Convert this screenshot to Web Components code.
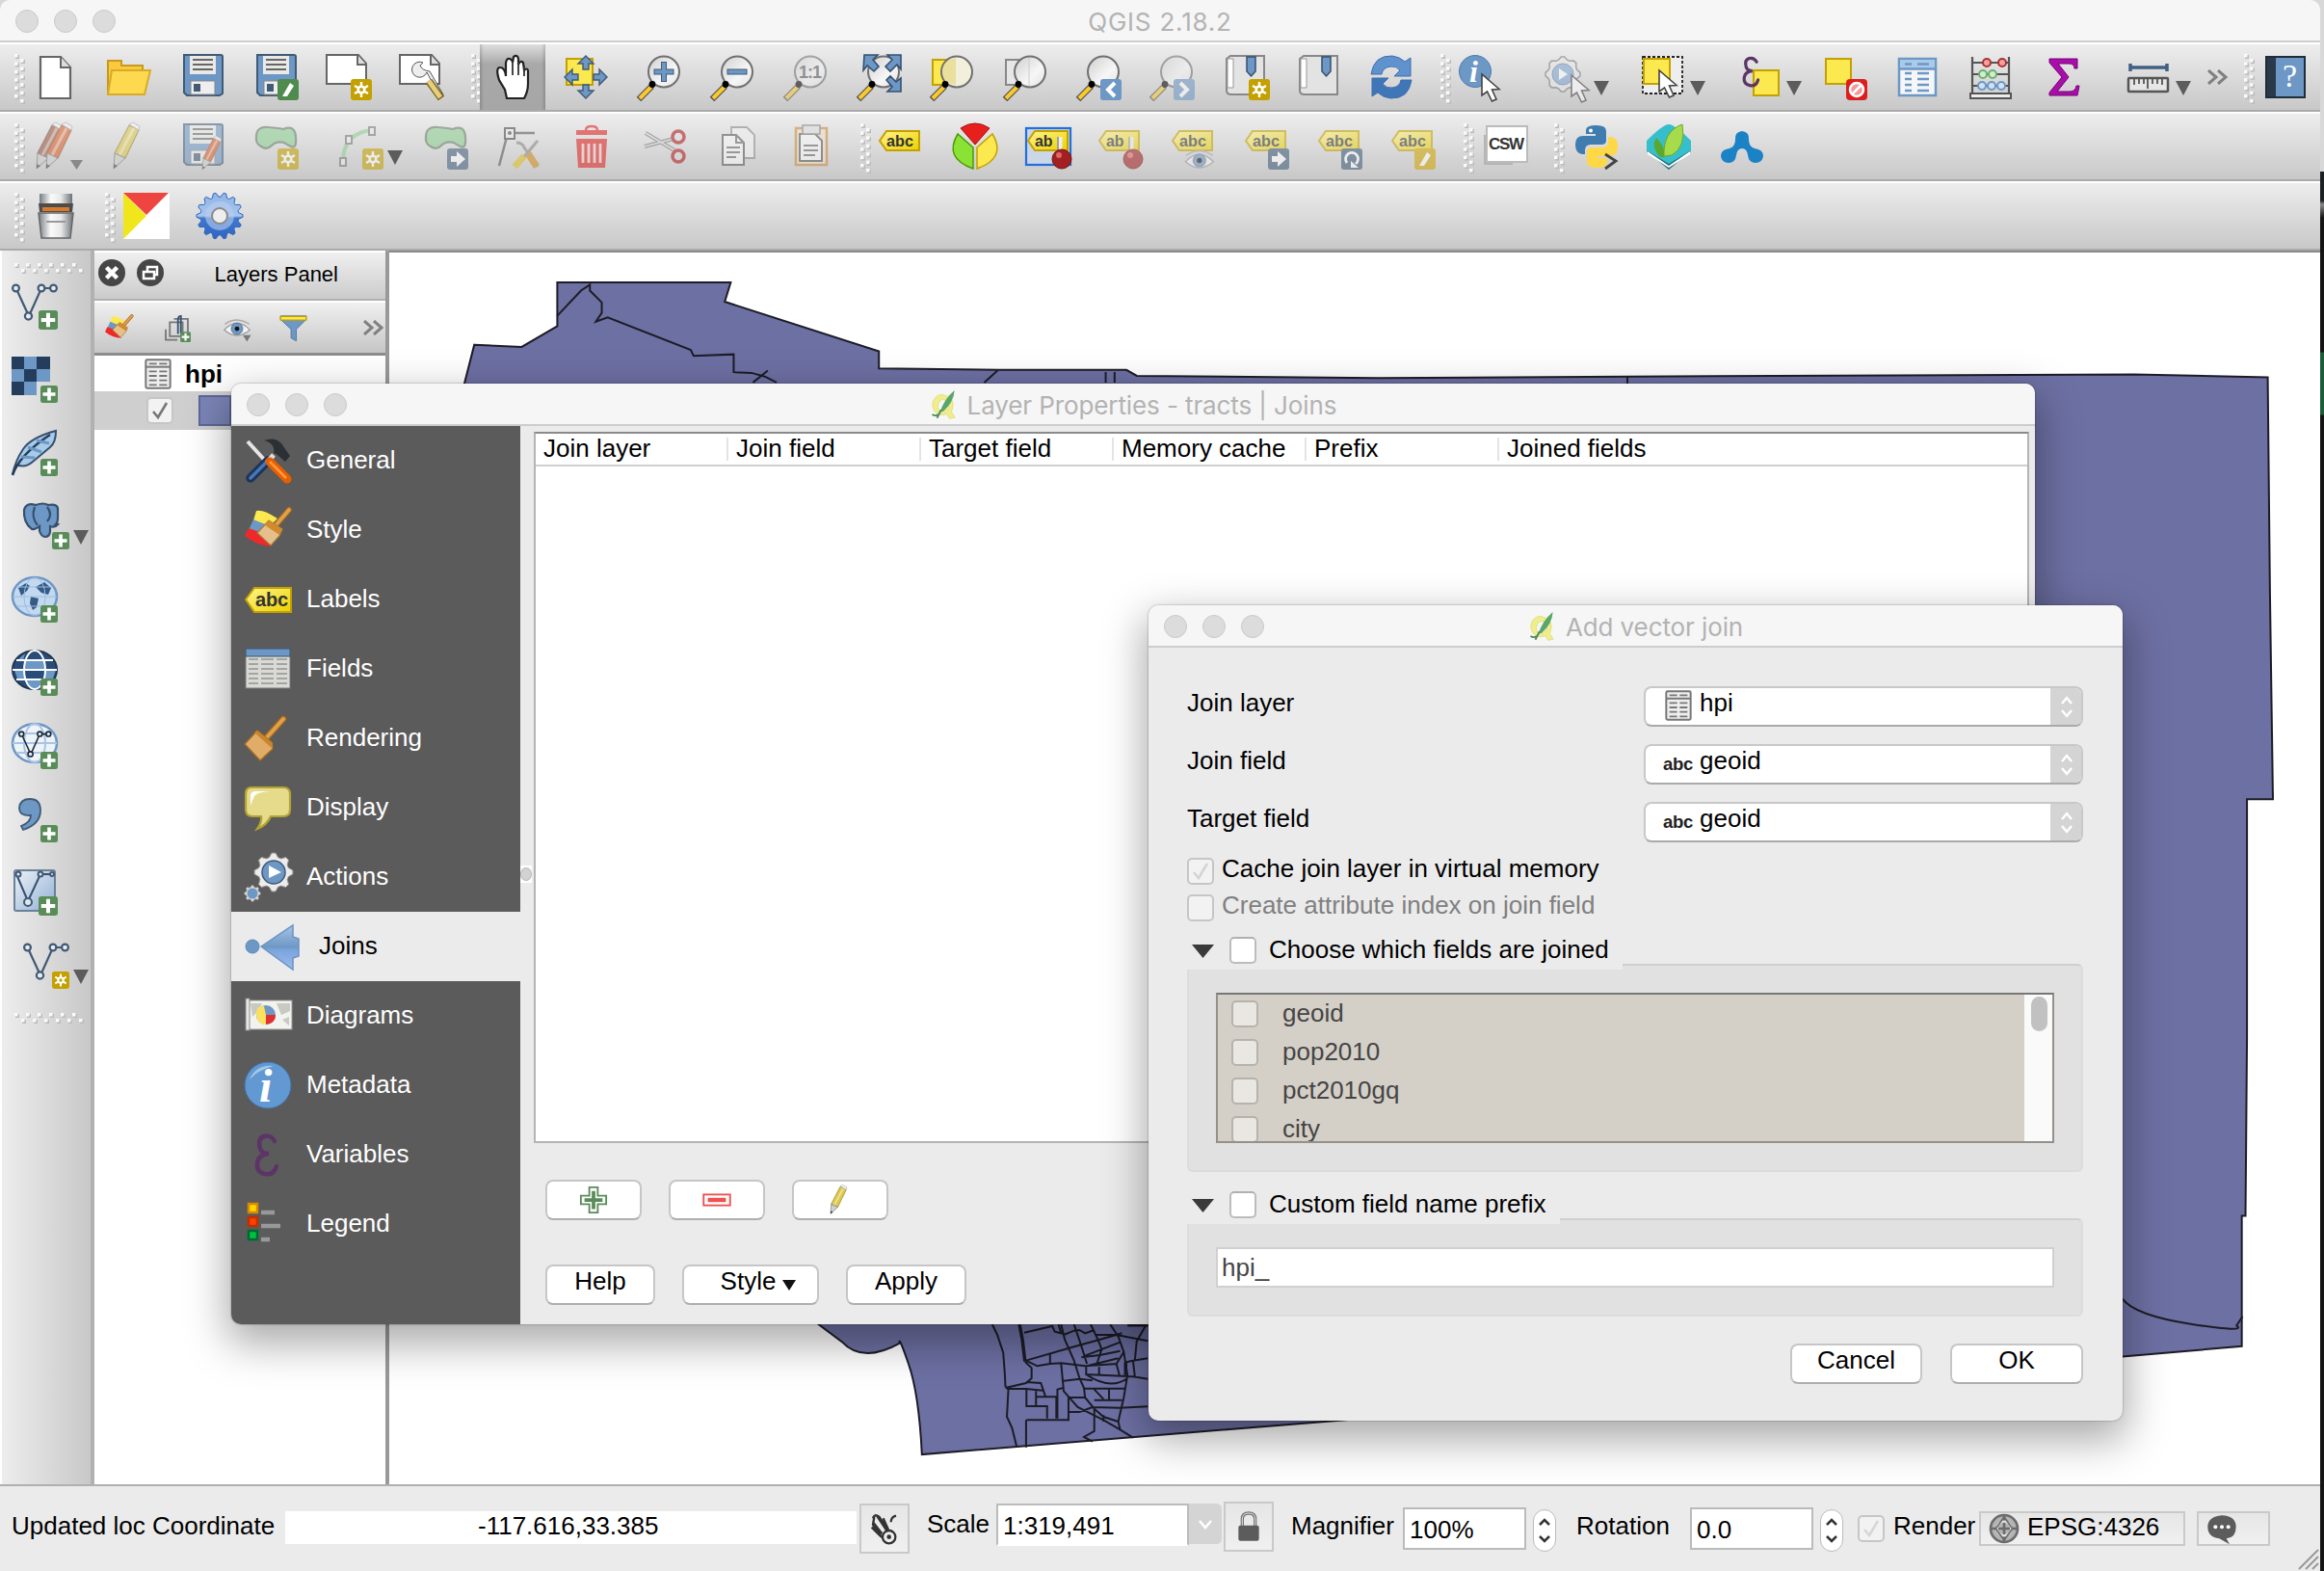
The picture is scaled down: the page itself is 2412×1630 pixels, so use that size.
<!DOCTYPE html>
<html lang="en">
<head>
<meta charset="utf-8">
<title>QGIS 2.18.2</title>
<style>
html,body{margin:0;padding:0;width:2412px;height:1630px;overflow:hidden;background:#1a1a1a}
body{font:26px/30px "Liberation Sans",Helvetica,Arial,sans-serif;color:#000}
</style>
</head>
<body>
<qgis-app></qgis-app>
<script>
const define = (name, css, html, setup) => customElements.define(name, class extends HTMLElement {
  connectedCallback() {
    if (this.shadowRoot) return;
    const root = this.attachShadow({ mode: 'open' });
    const t = document.createElement('template');
    t.innerHTML = `<style>*{box-sizing:border-box}:host{display:block;box-sizing:border-box}${css}</style>` + (typeof html === 'function' ? html(this) : html);
    root.appendChild(t.content.cloneNode(true));
    if (setup) setup(this, root);
  }
});

/* ---------- icon drawing ---------- */
const defs = `<defs>
<linearGradient id="yl" x1="0" y1="0" x2="1" y2="1"><stop offset="0" stop-color="#fff58a"/><stop offset="1" stop-color="#ecd000"/></linearGradient>
<linearGradient id="bl" x1="0" y1="0" x2="0" y2="1"><stop offset="0" stop-color="#a5c4e6"/><stop offset=".5" stop-color="#6d97c4"/><stop offset=".55" stop-color="#7ba3dc"/><stop offset="1" stop-color="#9bbcf0"/></linearGradient>
<linearGradient id="gb" x1="0" y1="0" x2="0" y2="1"><stop offset="0" stop-color="#8fb4e8"/><stop offset=".5" stop-color="#a9c6ee"/><stop offset=".55" stop-color="#3f78cf"/><stop offset="1" stop-color="#2f66c0"/></linearGradient>
<linearGradient id="mt" x1="0" y1="0" x2="1" y2="0"><stop offset="0" stop-color="#777d80"/><stop offset=".35" stop-color="#fafafa"/><stop offset=".65" stop-color="#e8e8e8"/><stop offset="1" stop-color="#6d7276"/></linearGradient>
<linearGradient id="ln" x1="0" y1="0" x2="1" y2="1"><stop offset="0" stop-color="#cfcfcf"/><stop offset=".6" stop-color="#f6f6f6"/><stop offset="1" stop-color="#e2e2e2"/></linearGradient>
<linearGradient id="bx" x1="0" y1="0" x2="1" y2="1"><stop offset="0" stop-color="#eef2f6"/><stop offset="1" stop-color="#8fafd6"/></linearGradient>
</defs>`;
const star = (x, y, s = 22) => `<g transform="translate(${x} ${y}) scale(${s / 22})"><rect width="22" height="22" rx="3" fill="#c4a000"/><path d="M11 3v16M4 7l14 8M18 7L4 15" stroke="#fff" stroke-width="2.4"/><circle cx="11" cy="11" r="4.6" fill="#fff"/><circle cx="11" cy="11" r="2" fill="#c4a000"/></g>`;
const plus = (x = 30, y = 30, s = 18) => `<g transform="translate(${x} ${y}) scale(${s / 18})"><rect width="18" height="18" rx="2.5" fill="#5a8c5a"/><path d="M9 2.5v13M2.5 9h13" stroke="#fff" stroke-width="3.6"/></g>`;
const lens = (inner = '', f = 'url(#ln)') => `<circle cx="29" cy="18.5" r="16" fill="${f}" stroke="#707070" stroke-width="2"/>${inner}<path d="M16.5 33.5L3 47" stroke="#555" stroke-width="6.6"/><path d="M15.5 34.5L4 46" stroke="#fcc92b" stroke-width="4"/><circle cx="17" cy="31.5" r="3.4" fill="#000"/>`;
const sq = (inner, c = '#6d97c4', x = 26, y = 26) => `<g transform="translate(${x} ${y})"><rect width="22" height="22" rx="3" fill="${c}"/>${inner}</g>`;
const floppy = `<path d="M5 1h38q2 0 2 2v38l-3 2H8l-3-3z" fill="#6d97c4" stroke="#415a75" stroke-width="2"/><rect x="11" y="2" width="27" height="19" fill="#e9e9e7"/><path d="M14 6h21M14 11h21M14 16h21" stroke="#666" stroke-width="2"/><rect x="12" y="28" width="25" height="14" fill="#eee" stroke="#888"/><rect x="15" y="31" width="7" height="8" fill="#415a75"/>`;
const page = `<path d="M3 1h33l8 9v21H3z" fill="#fff" stroke="#666" stroke-width="2"/><path d="M35 1v10h9" fill="#ddd" stroke="#666" stroke-width="2"/>`;
const cursor = (x, y) => `<path transform="translate(${x} ${y})" d="M0 0v22l5.500-4 5 10 4.500-2-4.500-10 7.500-.5z" fill="#fff" stroke="#444" stroke-width="1.600"/>`;
const tag = (t, y = 8) => `<path d="M3 ${y + 10}l7-10h34v20H10z" fill="url(#yl)" stroke="#c4a000" stroke-width="2"/><text x="10" y="${y + 16}" font-family="Liberation Sans,Arial,sans-serif" font-weight="bold" font-size="17" textLength="${t.length * 9.300}" lengthAdjust="spacingAndGlyphs" fill="#333">${t}</text>`;
const pen = (c, d, x = 0) => `<g transform="translate(${x} 0)"><path d="M15 31L30 2l10 5-14 29z" fill="${c}" stroke="${d}" stroke-width="1.200"/><path d="M20 33L35 5" stroke="#fff" stroke-opacity=".45" stroke-width="3"/><path d="M30 1l10 6 1-4-7-4z" fill="#f4f4f4" stroke="#aaa"/><path d="M15 31l11 5-12 11z" fill="#cfcfcf" stroke="#777"/><path d="M14 42v5l4-3z" fill="#444"/></g>`;
const blob = `<path d="M4 14Q4 3 16 4T32 6Q44 1 45 14T40 24 33 20Q25 18 20 23T9 24Q3 21 4 14z" fill="#8ccf90" stroke="#667a66" stroke-width="2.200"/>`;
const vee = c => `<path d="M6 8L18 34 31 5H43" fill="none" stroke="${c}" stroke-width="2.200"/><g fill="#e8edf2" stroke="${c}" stroke-width="2.200"><circle cx="4.500" cy="5" r="3.400"/><circle cx="17.500" cy="34" r="3.600"/><circle cx="31" cy="5" r="3.400"/><circle cx="43.500" cy="5" r="3.400"/></g>`;
const gearPath = (cx, cy, r, n, k) => { let d = ''; for (let i = 0; i < n * 4; i++) { const a = (i - .5) * Math.PI / (2 * n), q = (i % 4) < 2 ? r : r * k; d += (i ? 'L' : 'M') + (cx + q * Math.cos(a)).toFixed(1) + ' ' + (cy + q * Math.sin(a)).toFixed(1); } return d + 'z'; };
const eye = `<path d="M2 27Q24 4 46 27Q24 46 2 27z" fill="#f3f3f3" stroke="#999" stroke-width="2"/><path d="M3 17Q24 3 45 17" fill="none" stroke="#aaa" stroke-width="2.500"/><circle cx="24" cy="25" r="10" fill="#6d97c4" stroke="#415a75"/><circle cx="24" cy="25" r="4" fill="#111"/>`;
const pin = `<path d="M36 14v15" stroke="#eee" stroke-width="5"/><path d="M34 14v15" stroke="#888" stroke-width="1.500"/><circle cx="38" cy="37" r="10" fill="#a32020" stroke="#7a1515"/><circle cx="35" cy="33" r="3" fill="#d66"/>`;
const tableIc = (c, h) => `<rect x="5" y="5" width="38" height="38" fill="#f4f6f8" stroke="${c}" stroke-width="2.500"/><rect x="6" y="6" width="36" height="9" fill="${h}"/><path d="M5 15.500h38" stroke="${c}" stroke-width="2.500"/><path d="M11 10.500h7M24 10.500h12M11 20h7M24 20h12M11 26h7M24 26h12M11 32h7M24 32h12M11 38h7M24 38h12" stroke="${c}" stroke-width="2.500"/>`;
const brush = `<path d="M46 3L33 18" stroke="#a9681c" stroke-width="6" stroke-linecap="round"/><path d="M46 3L33 18" stroke="#e0a14a" stroke-width="3.600" stroke-linecap="round"/><path d="M25 14l14 9-3 7-9 10L13 27z" fill="#e6c08c" stroke="#a97a3c" stroke-width="1.200"/><path d="M25 14l14 9-3 6-15-10z" fill="#d18b2f"/>`;
const flag = `<path d="M12 4q7-2 22 8l-8 8-17-6z" fill="#fce94f"/><path d="M9 13q8 4 17 6l-9 12-13-7z" fill="#6d97c4"/><path d="M4 22l14 5 10 14Q12 40 0 30z" fill="#ef2929"/>`;
const globe = c => `<ellipse cx="24" cy="21" rx="23" ry="20" fill="${c}" stroke="#6d97c4" stroke-width="2.500"/>`;
const grid = s => `<g fill="none" stroke="${s}" stroke-width="2"><ellipse cx="24" cy="21" rx="11" ry="20"/><path d="M1 21h46M5 11h38M5 31h38"/></g>`;
const eps = c => `<path d="M28 10Q24 3 17 5T13 18Q15 23 22 23Q11 24 10 33T18 44 30 36" fill="none" stroke="${c}" stroke-width="4.500" stroke-linecap="round"/>`;

const icons = {
  new: `<path d="M8 3h21l10 11v32H8z" fill="#fff" stroke="#666" stroke-width="2.200"/><path d="M29 3v11h10" fill="#ddd" stroke="#666" stroke-width="2"/>`,
  open: `<path d="M2 42V7h14v5h22v10" fill="#fbc93d" stroke="#c79a1c" stroke-width="2"/><path d="M6 17h40l-6 25H2z" fill="#fdd94f" stroke="#d8aa28" stroke-width="2"/>`,
  save: floppy, saveas: floppy + sq('<path d="M5 18l8-14 4 3-7 11z" fill="#fff"/>', '#4f8a4f'),
  newcomp: page + star(28, 26), manager: page + `<path d="M27 9a8 8 0 1 0 4 10l10 19 7 4-14-24q-8-1-10-6z" fill="#eee" stroke="#555"/><path d="M33 28l13 18" stroke="#7a6320" stroke-width="8"/><path d="M33 28l12 17" stroke="#e6cf7a" stroke-width="5"/>`,
  pan: `<g transform="translate(2 0)"><path d="M16 46L14 37 8 27Q4 14 9 14t6 9V9q1-5 4-4t3 4l1-6q4-3 5 2v6q2-5 5-2l1 8q3-3 4 0v14q0 8-4 15z" fill="#fff" stroke="#222" stroke-width="2.200"/><path d="M22 8v14M28 8v14M34 12v11" stroke="#333" stroke-width="1.800"/></g>`,
  pansel: `<rect x="4" y="5" width="27" height="27" fill="#fce94f" stroke="#c4a000" stroke-width="2"/><path d="M24 2l8 8h-5v6h-6v-6h-5zM24 46l8-8h-5v-6h-6v6h-5zM2 24l8-8v5h6v6h-6v5zM46 24l-8-8v5h-6v6h6v5z" fill="#6d97c4" stroke="#415a75" stroke-width="1.400"/>`,
  zin: lens('<path d="M29 8v21M18.500 18.500h21" stroke="#415a75" stroke-width="6"/><path d="M29 9v19M19.500 18.500h19" stroke="#6d97c4" stroke-width="4"/>'),
  zout: lens('<path d="M18.500 18.500h21" stroke="#415a75" stroke-width="6"/><path d="M19.500 18.500h19" stroke="#6d97c4" stroke-width="4"/>'),
  z11: lens('<text x="17" y="25" font-family="Liberation Sans,Arial,sans-serif" font-weight="bold" font-size="18" textLength="24" fill="#555">1:1</text>'),
  zfull: lens() + `<path d="M9 1h14l-5 5 6 7-5 5-7-6-4 5zM47 1v15l-4-5-7 7-5-5 7-7-5-5zM47 39V25l-5 4-6-6-4 4 6 7-5 5z" fill="#6d97c4" stroke="#35506f" stroke-width="1.600"/>`,
  zsel: `<rect x="4" y="6" width="24" height="26" fill="#fce94f" stroke="#c4a000" stroke-width="2"/>` + lens('<path d="M28 4Q14 6 14 18t14 14z" fill="#e0d060" opacity=".5"/>', '#f2f0dc'),
  zlay: `<rect x="4" y="6" width="24" height="26" fill="#e6e6e6" stroke="#888" stroke-width="2"/>` + lens('<path d="M28 4v29" stroke="#ccc"/>'),
  zlast: lens() + sq('<path d="M15 4L8 11l7 7" stroke="#fff" stroke-width="4" fill="none"/>'),
  znext: lens() + sq('<path d="M7 4l7 7-7 7" stroke="#fff" stroke-width="4" fill="none"/>'),
  bookn: `<path d="M3 5l4-3h35v40H8q-5 0-5-4z" fill="#e3e3e3" stroke="#888" stroke-width="2"/><path d="M4 5h6v30H4z" fill="#fff" stroke="#999"/><path d="M24 3h9v15l-4.500 5-4.500-5z" fill="#6d97c4" stroke="#35506f" stroke-width="1.500"/>` + star(26, 26),
  book: `<path d="M3 5l4-3h35v40H8q-5 0-5-4z" fill="#e3e3e3" stroke="#888" stroke-width="2"/><path d="M4 5h6v30H4z" fill="#fff" stroke="#999"/><path d="M26 3h9v15l-4.500 5-4.500-5z" fill="#6d97c4" stroke="#35506f" stroke-width="1.500"/>`,
  refresh: `<path d="M3 21Q6 1 25 2q8 1 13 6l6-4v19H27l6-6q-4-5-10-4-8 1-9 8z" fill="#5f92cf" stroke="#3f6faa"/><path d="M45 27Q42 47 23 46q-8-1-13-6l-6 4V25h17l-6 6q4 5 10 4 8-1 9-8z" fill="#3f76b8" stroke="#3f6faa"/>`,
  identify: `<circle cx="17" cy="18" r="16.500" fill="#6d97c4" stroke="#4f7db0"/><text x="11" y="29" font-family="Liberation Serif,serif" font-weight="bold" font-style="italic" font-size="32" fill="#fff">i</text>` + cursor(24, 21),
  action: `<path d="${gearPath(20, 21, 18, 8, .86)}" fill="#e8e8e8" stroke="#777" stroke-width="1.500"/><circle cx="20" cy="21" r="11" fill="#7fa5d0" stroke="#5d7b9e"/><path d="M16 15l9 6-9 6z" fill="#fff"/>` + cursor(29, 22),
  select: `<rect x="2" y="3" width="41" height="38" fill="#eee" stroke="#222" stroke-width="1.800" stroke-dasharray="3 2"/><rect x="3" y="5" width="27" height="26" fill="#fce94f" stroke="#c4a000" stroke-width="2"/>` + cursor(19, 17),
  expr: `<rect x="14" y="17" width="26" height="26" fill="#fce94f" stroke="#c4a000" stroke-width="2"/><g transform="translate(-3 1) scale(.72)">${eps('#5c3566')}</g>`,
  desel: `<rect x="3" y="5" width="26" height="26" fill="#fce94f" stroke="#c4a000" stroke-width="2"/><rect x="24" y="26" width="22" height="22" rx="4" fill="#dc1e1e"/><circle cx="35" cy="37" r="7" fill="#f09a9a" stroke="#fff" stroke-width="2.500"/><path d="M30 42l10-10" stroke="#fff" stroke-width="2.500"/>`,
  table: tableIc('#6d97c4', '#a9cbea'),
  abacus: `<path d="M5 3v38M43 3v38M5 9h38M5 21h38M5 33h38" stroke="#555" stroke-width="2.200"/><rect x="3" y="41" width="42" height="5" fill="#eee" stroke="#555" stroke-width="2"/><g stroke-width="2"><g fill="#f6a0a0" stroke="#a33"><circle cx="20" cy="9" r="4"/><circle cx="36" cy="9" r="4"/></g><g fill="#cfeecf" stroke="#6fae6f"><circle cx="16" cy="21" r="4"/><circle cx="26" cy="21" r="4"/></g><g fill="#cfe2f6" stroke="#6d97c4"><circle cx="15" cy="33" r="4"/><circle cx="25" cy="33" r="4"/><circle cx="35" cy="33" r="4"/></g></g>`,
  sigma: `<path d="M9 5h29v10h-3q0-5-6-5H18l11 14-12 15h13q6 0 7-6h3l-2 10H9v-3l13-16L9 9z" fill="#a80fa8" stroke="#780078"/>`,
  ruler: `<path d="M5 14h38M5 10v8M43 10v8" stroke="#415f82" stroke-width="3.500"/><rect x="3" y="25" width="41" height="14" rx="1" fill="#e6e6e6" stroke="#555" stroke-width="2.500"/><path d="M9 26v6M14 26v5M19 26v5M23 26v10M28 26v5M33 26v5M38 26v6" stroke="#555" stroke-width="1.800"/>`,
  help: `<rect x="4" y="3" width="40" height="42" fill="#6d97c4" stroke="#1f2c3a" stroke-width="2"/><rect x="5" y="4" width="9" height="40" fill="#2a3a4b"/><text x="21" y="34" font-family="Liberation Serif,serif" font-size="34" fill="#fff">?</text>`,
  pens: pen('#9a5540', '#7a4a3a', -12) + pen('#d8602a', '#a54a20', -2),
  pencil: pen('#ddc94a', '#9a8a30', -6),
  saveed: floppy + `<g transform="translate(14 14) scale(.72)">${pen('#d8602a', '#a54a20')}</g>`,
  addf: blob + star(26, 26),
  curve: `<path d="M6 40Q6 10 36 7" fill="none" stroke="#8ccf90" stroke-width="4"/><g fill="#eee" stroke="#777" stroke-width="2"><rect x="3" y="36" width="6" height="8"/><rect x="9" y="13" width="6" height="8"/><rect x="33" y="4" width="6" height="8"/></g>` + star(26, 26),
  movef: blob + sq('<path d="M4 8h6V3l9 8-9 8v-5H4z" fill="#fff"/>', '#45617f'),
  node: `<path d="M10 14L2 44M13 10h26" stroke="#555" stroke-width="2.500"/><rect x="8" y="5" width="10" height="11" fill="#eee" stroke="#444" stroke-width="2"/><circle cx="13" cy="10" r="2" fill="#444"/><path d="M42 18L20 44" stroke="#888" stroke-width="3"/><path d="M28 34L18 45" stroke="#e0c020" stroke-width="7"/><path d="M20 20q6 0 8 5l14 20" stroke="#888" fill="none" stroke-width="3"/><path d="M32 31l9 14" stroke="#d08c18" stroke-width="7"/>`,
  trash: `<path d="M18 7q0-4 6-4t6 4" fill="none" stroke="#e0201c" stroke-width="2.500"/><rect x="8" y="7" width="32" height="5" fill="#e0201c"/><path d="M8 16h32l-2 30H10z" fill="#e0201c"/><path d="M15 21v20M21 21v20M27 21v20M33 21v20" stroke="#f0d0d0" stroke-width="2.800"/>`,
  cut: `<path d="M4 10l30 18M3 24l30-8" stroke="#777" stroke-width="4"/><path d="M4 10l30 18M3 24l30-8" stroke="#ddd" stroke-width="1.500"/><g fill="none" stroke="#b01818" stroke-width="3.500"><circle cx="38" cy="14" r="6"/><circle cx="38" cy="34" r="6"/></g>`,
  copy: `<path d="M17 4h16l8 8v24H17z" fill="#f2f2f2" stroke="#888" stroke-width="1.800"/><path d="M8 12h14l8 8v23H8z" fill="#fafafa" stroke="#555" stroke-width="2"/><path d="M22 12v8h8M12 25h14M12 30h14M12 35h10" stroke="#666" stroke-width="2" fill="none"/>`,
  paste: `<rect x="8" y="5" width="32" height="38" fill="#f0e0cc" stroke="#c88a3a" stroke-width="2.500"/><path d="M12 11h16l7 7v21H12z" fill="#fafafa" stroke="#555" stroke-width="2"/><path d="M16 23h15M16 28h15M16 33h12" stroke="#666" stroke-width="2"/><rect x="15" y="2" width="18" height="9" fill="#ddd" stroke="#777" stroke-width="1.500"/>`,
  abc: tag('abc'), abpin: `<rect x="1" y="5" width="46" height="38" fill="#cbd6e6" stroke="#1f6fdc" stroke-width="2.200"/>` + tag('ab') + pin,
  abpin2: tag('ab') + pin, abeye: tag('abc') + `<g transform="translate(15 22) scale(.66)">${eye}</g>`,
  abmove: tag('abc') + sq('<path d="M4 8h6V3l9 8-9 8v-5H4z" fill="#fff"/>', '#3d5a78'),
  abrot: tag('abc') + sq('<path d="M6 15a6.500 6.500 0 1 1 9 1" fill="none" stroke="#fff" stroke-width="2.800"/><path d="M10 13v7h8z" fill="#fff"/>', '#3d5a78'),
  abedit: tag('abc') + sq('<path d="M5 18l8-14 4 3-7 11z" fill="#fff"/>', '#d0a500'),
  pie: `<path d="M24 22L9 5Q24-5 39 5z" fill="#e8201c" stroke="#a01010"/><path d="M22 47V25L6 11Q-9 36 22 47z" fill="#8ae234" stroke="#4e9a06" stroke-width="1.500"/><path d="M26 47V25L42 11Q57 36 26 47z" fill="#fce94f" stroke="#c4a000" stroke-width="1.500"/>`,
  csw: `<rect x="1" y="12" width="30" height="31" fill="#b5b5b5"/><rect x="4" y="3" width="42" height="37" fill="#fff" stroke="#bbb" stroke-width="2"/><text x="6" y="27" font-family="Liberation Sans,Arial,sans-serif" font-weight="bold" font-size="17" textLength="37" fill="#333">CSW</text>`,
  python: `<path d="M24 2q10 0 10 6v10q0 4-5 4H18q-6 0-6 6v4H9Q2 31 2 22t8-9h13v-2H13V7q0-5 11-5z" fill="#3f7cb0"/><circle cx="18" cy="7.500" r="2" fill="#fff"/><path d="M24 46q-10 0-10-6V29q0-4 5-4h11q6 0 6-6v-5h3q7 1 7 10t-8 10H25v2h10v4q0 6-11 6z" fill="#ffd845"/><path d="M33 32l11 7-11 8" fill="none" stroke="#444" stroke-width="2.800"/>`,
  leaf: `<path d="M1 29l23 19 23-19-3-4-20 15L4 25z" fill="#1f6d78"/><path d="M24 1Q30 1 47 18v10L24 42 1 28V18Q18 1 24 1z" fill="#35bfcc"/><path d="M2 29l22 15 22-15v3L24 46 2 32z" fill="#fff"/><path d="M15 35Q5 24 11 15q9 8 9 20z" fill="#5aa82f"/><path d="M19 34Q18 8 38 1q4 24-11 32z" fill="#a6dc4c" stroke="#6da82a"/>`,
  dots: `<path d="M17 17q-1-8 7-9 8 1 7 9 0 7 6 9 9 1 9 8-1 7-8 7t-8-8q-1-7-6-7t-6 7q-1 8-8 8t-8-7q0-7 9-8 6-2 6-9z" fill="#1b82c5"/>`,
  bucket: `<path d="M7 1h34v10H7z" fill="url(#mt)"/><path d="M6 11h36l-1 9H7z" fill="#4c4c4c"/><path d="M10 15h28v4H10z" fill="#d97a2b"/><path d="M6 21h36l-3 26H9z" fill="url(#mt)" stroke="#666" stroke-width="1.500"/><path d="M14 30h20" stroke="#999" stroke-width="2"/>`,
  flag: `<rect width="48" height="48" fill="#fff"/><path d="M0 0l24 24L0 48z" fill="#efe61c"/><path d="M0 0h47L24 23z" fill="#ee4540"/>`,
  gear: `<path d="${gearPath(24, 24, 24, 14, .83)}" fill="url(#gb)" stroke="#2f66c0" stroke-width="1"/><circle cx="24" cy="24" r="15" fill="#b9cdee" opacity=".6"/><circle cx="24" cy="24" r="8" fill="#eee" stroke="#8a8a8a" stroke-width="2"/>`,
  vnew: vee('#415a75') + plus(28, 28, 20), vstar: vee('#415a75') + star(30, 30, 18),
  raster: `<g fill="#6d97c4"><path d="M0 0h40v26H26v14H0z"/></g><path d="M0 0h13v13H0zM26 0h14v13H26zM13 13h13v13H13zM0 26h13v14H0z" fill="#243d5c"/>` + plus(),
  feather: `<path d="M1 46Q4 32 12 20T46 1q0 12-6 17L22 33Q14 40 5 36z" fill="#a9cbea" stroke="#35506f" stroke-width="2"/><path d="M1 47Q8 26 40 5" fill="none" stroke="#243d5c" stroke-width="2.500"/><path d="M10 28l14 1M17 18l14 5M26 11l13 3" stroke="#6d97c4" stroke-width="3"/>` + plus(),
  pg: `<path d="M1 7Q3-1 13 2q8-3 13 0 11-2 10 6v8q0 4-2 6l2 0q-3 4-8 2v6q-1 5-5 5t-6-6v-5q-5 4-8 3Q0 20 1 7z" fill="#6d97c4" stroke="#35506f" stroke-width="2.200"/><path d="M12 4q-4 11 3 19M25 4q6 8 0 15" fill="none" stroke="#35506f" stroke-width="2.200"/>` + plus(),
  earth: globe('#c3d9ef') + `<path d="M7 12l8-5 4 3-3 5-6 5zM25 11l9-5 7 6-3 7-7-2zM20 21l8 2-2 9-4 3-3-7z" fill="#355a86"/>` + grid('#9dbde0').replace('stroke-width="2"', 'stroke-width="1"') + plus(),
  wms: `<ellipse cx="24" cy="21" rx="23" ry="20" fill="#294d78" stroke="#1f3550" stroke-width="2"/><path d="M14 12h20v9H14zM3 21h10v9H6zM35 21h11l-3 9h-8zM15 31h18l-5 9h-8zM6 11l8-7-2 7z" fill="#6d97c4"/>` + grid('#fff') + plus(),
  wfs: globe('#eef3f8') + grid('#a9c4e4') + `<g transform="translate(7 8) scale(.72)">${vee('#1b2a3a')}</g>` + plus(),
  comma: `<path d="M19 3q11 0 11 12 0 14-18 20l-2-4q10-4 10-11Q8 21 8 12q1-9 11-9z" fill="#6d97c4" stroke="#415a75" stroke-width="1.800"/>` + plus(),
  vbox: `<rect x="3" y="1" width="42" height="42" rx="2" fill="url(#bx)" stroke="#6b8199" stroke-width="2"/><path d="M5 5l12 28L30 5h12" fill="none" stroke="#35506f" stroke-width="2"/><g fill="#dfe7ef" stroke="#415a75" stroke-width="2"><circle cx="17" cy="34" r="4"/><circle cx="7" cy="5" r="2.500"/><circle cx="30" cy="5" r="2.500"/><circle cx="42" cy="5" r="2"/></g>` + plus(28, 28, 20),
  tools: `<path d="M3 4l20 22" stroke="#e6e6e6" stroke-width="4"/><path d="M6 42L24 24" stroke="#1c355c" stroke-width="9.500" stroke-linecap="round"/><path d="M6 42L23 25" stroke="#4a76b4" stroke-width="3.500" stroke-linecap="round"/><path d="M30 18l-7 8" stroke="#ddd" stroke-width="5"/><path d="M20 3q14-5 20 6l7 10-5 6-8-7-4-2Q32 6 20 3z" fill="#2a3034"/><path d="M26 25l18 18" stroke="#e85f00" stroke-width="9" stroke-linecap="round"/><path d="M26 25l17 17" stroke="#ff9a3c" stroke-width="2.500"/>`,
  style: flag + brush, broom: `<g transform="translate(-4 2)"><path d="M44 2L27 21" stroke="#a9681c" stroke-width="6.500" stroke-linecap="round"/><path d="M44 2L27 21" stroke="#e0a14a" stroke-width="4" stroke-linecap="round"/><path d="M17 14l15 12 1 7-13 12L4 28z" fill="#e0ac68" stroke="#a06c22" stroke-width="1.300"/><path d="M17 14l16 13v6L14 16z" fill="#c9852b"/></g>`,
  label: `<path d="M1 24l9-12h38v25H10z" fill="url(#yl)" stroke="#c4a000" stroke-width="2"/><text x="11" y="31" font-family="Liberation Sans,Arial,sans-serif" font-weight="bold" font-size="20" textLength="34" fill="#333">abc</text>`,
  fields: `<rect x="1" y="3" width="46" height="41" fill="#d9dad5" stroke="#777"/><rect x="1" y="3" width="46" height="8" fill="#6d97c4" stroke="#35506f"/><path d="M4 14h10M17 14h13M33 14h11M4 19h10M17 19h13M33 19h11M4 24h10M17 24h13M33 24h11M4 29h10M17 29h13M33 29h11M4 34h10M17 34h13M33 34h11M4 39h10M17 39h13M33 39h11" stroke="#a4a5a0" stroke-width="2"/>`,
  display: `<path d="M7 3h33q7 0 7 7v16q0 7-7 7H27q-4 9-14 13 5-7 4-13H8q-7 0-7-7V10q0-7 6-7z" fill="#e5db8b" stroke="#b3a333" stroke-width="2.200"/><path d="M6 22V12q0-5 6-5h14q-14 1-16 5t-4 10z" fill="#fff"/>`,
  actions: `<path d="${gearPath(30, 19, 20, 8, .8)}" fill="#ececec" stroke="#999"/><circle cx="30" cy="19" r="12" fill="#6d97c4" stroke="#415a75" stroke-width="1.500"/><path d="M25 12l13 7-13 6z" fill="#fff"/><path d="${gearPath(8, 41, 8.500, 8, .8)}" fill="#ddd" stroke="#888"/><circle cx="8" cy="41" r="5.500" fill="#6d97c4"/>`,
  joins: `<circle cx="8" cy="24" r="7" fill="#6d97c4" stroke="#5f88b8"/><path d="M17 24L50 2v12l6 2v18l-6 2v12z" fill="url(#bl)" stroke="#6b93c4" stroke-width="1.500"/>`,
  diagrams: `<rect x="4" y="8" width="45" height="30" fill="#f2f2ee" stroke="#999"/><rect x="1" y="6" width="4" height="33" fill="#e8e8e8" stroke="#888"/><path d="M6 11h12l-4 8-6 6zM33 11h14v8l-9 4zM39 28l7-3v9z" fill="#c6cac0"/><circle cx="22" cy="23" r="10" fill="#6d97c4"/><path d="M22 23v10q-9 0-10-10t8-9z" fill="#fce060"/><path d="M22 23h10q0 9-10 10z" fill="#e03030"/>`,
  meta: `<circle cx="24" cy="24" r="24" fill="#6299d2" stroke="#4273aa"/><path d="M5 18Q12 2 30 4 14 8 5 18z" fill="#a5c6e8"/><text x="15" y="41" font-family="Liberation Serif,serif" font-weight="bold" font-style="italic" font-size="48" fill="#fff">i</text>`,
  vars: `<g transform="translate(3 0)">${eps('#5c3566')}</g>`,
  legend: `<g stroke-width="2.500"><rect x="4" y="3" width="9" height="9" fill="#ffd500" stroke="#d88a00"/><rect x="4" y="17" width="9" height="9" fill="#ff4000" stroke="#c03000"/><rect x="4" y="31" width="9" height="9" fill="#00c040" stroke="#006a30"/></g><path d="M17 12h14M17 26h20M17 40h9" stroke="#999" stroke-width="4.500"/>`,
  laygrp: `<path d="M5 26v18h20M12 14h22v24H12zM19 8h24v22" fill="none" stroke="#777" stroke-width="3"/><path d="M26 34V10q0-7 5-7v30" fill="none" stroke="#35506f" stroke-width="3"/>` + plus(30, 30, 18),
  eyes: eye + `<path d="M34 36h14l-7 11z" fill="#777"/>`,
  filter: `<path d="M2 3h44v6L29 26v20l-9-5V26L2 9z" fill="#6d97c4" stroke="#52779f" stroke-width="1.500"/><path d="M2 4h44v6H2z" fill="#fce94f" stroke="#c4a000" stroke-width="2"/>`,
  gtable: `<rect x="5" y="2" width="38" height="44" rx="2" fill="#eee" stroke="#777" stroke-width="3"/><path d="M5 13h38" stroke="#777" stroke-width="3"/><path d="M10 8h12M26 8h12M10 20h12M26 20h12M10 27h12M26 27h12M10 34h12M26 34h12M10 41h12M26 41h12" stroke="#777" stroke-width="2.800"/>`,
  qgis: `<path d="M21 7a16 17 0 1 0 7 32l5 8 9-2-6-9Q46 12 21 7zM22 15q12 2 8 18l-4-4-6 2 5 6q-7 2-10-4t0-12 7-6z" fill="#efed8c" fill-rule="evenodd" stroke="#d9d86a" stroke-width="1"/><path d="M41 0Q24 14 17 36l5-1Q40 20 41 0z" fill="#5aa66a"/><path d="M19 32l-7 14M4 40q6 4 12-1" stroke="#4f8a5a" stroke-width="3" fill="none"/>`,
  add: `<path d="M17 3h14v14h14v14H31v14H17V31H3V17h14z" fill="#fff" stroke="#5a8c5a" stroke-width="3"/><path d="M24 9v30M9 24h30" stroke="#5a8c5a" stroke-width="6"/>`,
  minus: `<rect x="2" y="15" width="44" height="18" fill="#fff" stroke="#f05050" stroke-width="3"/><rect x="9" y="20.500" width="30" height="7" fill="#f05050"/>`,
  mouse: `<g fill="none" stroke="#333" stroke-width="3.500"><path d="M6 8Q8 0 16 6l14 22M6 14l14 18M12 4l16 24M4 22l14 14M8 6l-2 12 14 20M22 8l8 18M34 14q0-8 8-10"/><circle cx="31" cy="37" r="10" fill="#eee"/></g><circle cx="31" cy="37" r="3.500" fill="#333"/>`,
  lock: `<path d="M14 24V12q0-9 10-9t10 9v12" fill="none" stroke="#777" stroke-width="5"/><path d="M14 24V12q0-9 10-9t10 9v12" fill="none" stroke="#ddd" stroke-width="1.500"/><rect x="8" y="22" width="32" height="24" rx="3" fill="#5c5c5c"/>`,
  crs: `<circle cx="24" cy="24" r="21" fill="#b4b4b4" stroke="#6c6c6c" stroke-width="4"/><path d="M24 3v42M3 24h42" stroke="#6c6c6c" stroke-width="4"/><circle cx="24" cy="24" r="11" fill="none" stroke="#e4e4e4" stroke-width="3.500"/><path d="M24 6L11 24l13 18 13-18z" fill="none" stroke="#6c6c6c" stroke-width="2.500"/>`,
  bubble: `<path d="M24 2q22 1 22 18T31 38l5 9-16-9Q2 36 2 20T24 2z" fill="#5c5c5c"/><g fill="#fff"><circle cx="14" cy="20" r="3"/><circle cx="24" cy="20" r="3"/><circle cx="34" cy="20" r="3"/></g>`
};

define('q-icon', ':host{flex:none;width:48px;height:48px}svg{display:block;width:100%;height:100%;overflow:visible}:host([dim]) svg{opacity:.56}',
  h => `<svg viewBox="0 0 48 48">${defs}${icons[h.getAttribute('name')] || ''}</svg>`);
define('q-arrow', ':host{flex:none;width:16px;height:15px}svg{display:block;width:100%;height:100%}',
  h => `<svg viewBox="0 0 16 15" preserveAspectRatio="none"><path d="M0 0h16L8 15z" fill="${h.getAttribute('color') || '#5c5c5c'}"/></svg>`);
define('q-chevron', ':host{flex:none;width:21px;height:16px}svg{display:block;width:100%;height:100%}',
  `<svg viewBox="0 0 21 16"><path d="M1 1l8 7-8 7M11 1l8 7-8 7" fill="none" stroke="#808080" stroke-width="3"/></svg>`);
define('q-grip', ':host{flex:none}svg{display:block}', h => {
  const v = !h.hasAttribute('flat'); let s = '';
  for (let i = 0; i < 6; i++) {
    const a = v ? [1, i * 8.400 + i % 1] : [i * 12 + 1, 1], b = v ? [7, i * 8.400 + 5] : [i * 12 + 8, 7];
    for (const [x, y] of [a, b]) s += `<rect x="${x + 1}" y="${y + 1}" width="4" height="4" fill="#bbb"/><rect x="${x}" y="${y}" width="3.500" height="3.500" fill="#fafafa"/>`;
  }
  return v ? `<svg width="12" height="52">${s}</svg>` : `<svg width="76" height="13">${s}</svg>`;
});

/* ---------- toolbars: [kind, left edge, dimmed] ---------- */
const rows = [
  [['grip', 14], ['new', 34], ['open', 110], ['save', 186], ['saveas', 262], ['newcomp', 336], ['manager', 412], ['grip', 488], ['pan', 508], ['pansel', 584], ['zin', 660], ['zout', 736], ['z11', 812, 1], ['zfull', 888], ['zsel', 964], ['zlay', 1040], ['zlast', 1116], ['znext', 1192, 1], ['bookn', 1270], ['book', 1346], ['refresh', 1420], ['grip', 1494], ['identify', 1514], ['action', 1602, 1], ['arrow', 1654], ['select', 1703], ['arrow', 1754], ['expr', 1806], ['arrow', 1854], ['desel', 1892], ['table', 1966], ['abacus', 2042], ['sigma', 2118], ['ruler', 2206], ['arrow', 2258], ['chev', 2291], ['grip', 2328], ['help', 2348]],
  [['grip', 14], ['pens', 36, 1], ['arrowp', 73], ['pencil', 110, 1], ['saveed', 186, 1], ['addf', 262, 1], ['curve', 350, 1], ['arrow', 402], ['movef', 438, 1], ['node', 516, 1], ['trash', 590, 1], ['cut', 666, 1], ['copy', 742, 1], ['paste', 818, 1], ['grip', 892], ['abc', 910], ['pie', 988], ['abpin', 1064], ['abpin2', 1138, 1], ['abeye', 1214, 1], ['abmove', 1290, 1], ['abrot', 1366, 1], ['abedit', 1442, 1], ['grip', 1518], ['csw', 1539], ['grip', 1612], ['python', 1633], ['leaf', 1708], ['dots', 1784]],
  [['grip', 14], ['bucket', 34], ['grip', 108], ['flag', 128], ['gear', 204]]
];
define('q-toolbar', `:host{display:flex;height:72px;flex:none;border-top:2px solid #fff;border-bottom:2px solid #aaa;background:linear-gradient(#ededed,#c8c8c8);align-items:flex-start}
.pressed{height:68px;width:68px;background:linear-gradient(90deg,rgba(0,0,0,.16),transparent 4px,transparent 64px,rgba(0,0,0,.16)),linear-gradient(#dedede,#a9a9a9 30%,#a6a6a6);display:flex;padding:10px}
q-icon,q-grip{margin-top:10px}.pressed q-icon{margin-top:0}`, h => {
  let end = 0;
  return rows[+h.getAttribute('row')].map(([n, x, dim]) => {
    const place = (left, w, tag, attrs, mt, inner = '') => { const m = left - end; end = left + w; return `<${tag} ${attrs} style="margin-left:${m}px;${mt}">${inner}</${tag}>`; };
    if (n === 'grip') return place(x, 12, 'q-grip', '', '');
    if (n === 'arrow') return place(x, 16, 'q-arrow', '', 'margin-top:38px');
    if (n === 'arrowp') return place(x, 13, 'q-arrow', 'color="#8a8a8a"', 'margin-top:48px;width:13px;height:10px');
    if (n === 'chev') return place(x, 21, 'q-chevron', '', 'margin-top:26px');
    if (n === 'pan') return place(498, 68, 'div', 'class="pressed"', '', '<q-icon name="pan"></q-icon>');
    return place(x, 48, 'q-icon', `name="${n}" ${dim ? 'dim' : ''}`, '');
  }).join('');
});

define('q-lights', ':host{display:flex;gap:16px;width:200px;padding-left:16px;flex:none}i{width:24px;height:24px;border-radius:50%;background:#dcdcdc;border:1.500px solid #cacaca}', '<i></i><i></i><i></i>');
define('q-titlebar', `:host{display:flex;align-items:center;height:44px;flex:none;background:#f6f6f6;border-bottom:2px solid #cdcdcd;border-radius:10px 10px 0 0;font:26px/32px Inter,"Liberation Sans",sans-serif;color:#b3b3b3;white-space:nowrap;padding-top:2px}
.t{flex:1;display:flex;justify-content:center;align-items:center;gap:9px;padding-top:2px}.t q-icon{width:30px;height:32px;margin-top:-2px}.end{width:200px}`,
  h => `<q-lights></q-lights><div class="t">${h.hasAttribute('logo') ? '<q-icon name="qgis"></q-icon>' : ''}<slot></slot></div><div class="end"></div>`);

define('q-check', `:host{flex:none;width:28px;height:28px;border:2px solid #bcbcbc;border-top-color:#b0b0b0;border-radius:5px;background:#fff}
:host([off]){background:#f2f2f2;border-color:#c6c6c6}:host([list]){background:#e8e7e2;border-color:#b7b3aa}svg{display:block;width:24px;height:24px}`,
  h => h.hasAttribute('mark') ? `<svg viewBox="0 0 24 24"><path d="M5 13l5 6L19 4" fill="none" stroke="${h.getAttribute('mark')}" stroke-width="2.600"/></svg>` : '');
define('q-button', ':host{display:flex;justify-content:center;height:42px;border:2px solid #c6c6c6;border-bottom-color:#aeaeae;border-radius:8px;background:#fff;padding-top:0;flex:none}q-icon,::slotted(q-icon){margin-top:4px}', '<slot></slot>');

define('side-tools', `:host{display:flex;flex-direction:column;width:98px;flex:none;border-left:2px solid #fff;border-right:4px solid #b1b1b1;background:linear-gradient(90deg,#ededed,#c8c8c8);padding:12px 0 0 10px;gap:28px}
q-grip{margin:0 0 -18px 2px;height:12px}.m{display:flex;padding-left:12px;gap:4px;align-items:flex-start}.m q-arrow{margin-top:28px}.last{margin:-4px 0 0 2px}`,
  `<q-grip flat></q-grip>${['vnew', 'raster', 'feather', '*pg', 'earth', 'wms', 'wfs', 'comma', 'vbox', '*vstar'].map(n => n[0] === '*' ? `<div class="m"><q-icon name="${n.slice(1)}"></q-icon><q-arrow></q-arrow></div>` : `<q-icon name="${n}"></q-icon>`).join('')}<q-grip flat class="last"></q-grip>`);

define('layers-panel', `:host{display:flex;flex-direction:column;width:306px;flex:none;background:#fff;border-right:4px solid #999}
.head{height:50px;display:flex;align-items:center;border-top:2px solid #fff;background:linear-gradient(#f0f0f0,#cbcbcb);padding:0 49px 4px 4px;font-size:22px;gap:12px}
.head span{flex:1;text-align:right;padding-top:1px}.head svg{flex:none;margin-top:-2px}
.bar{height:59px;border-top:2px solid #b0b0b0;border-bottom:3px solid #8c8c8c;background:linear-gradient(#fff 2px,#f0f0f0 2px,#c6c6c6);display:flex;align-items:center;padding:2px 2px 0 11px}
.bar q-icon{width:29px;height:29px;margin-right:31px}.bar q-icon:nth-child(3){width:34px;margin-right:27px}.bar q-icon:nth-child(4){margin-right:auto}
.row{height:37px;display:flex;align-items:center;padding-left:50px;font-weight:bold}.row q-icon{width:32px;height:32px;margin-right:12px}
.sel{height:40px;background:#cfcfcf;padding-left:54px}.sel b{width:34px;height:32px;background:#7b85b6;border:2px solid #5d6799;margin-left:26px}`,
  `<div class="head"><svg width="28" height="28"><circle cx="14" cy="14" r="14" fill="#464646"/><path d="M8.500 8.500l11 11M19.500 8.500l-11 11" stroke="#fff" stroke-width="4.500"/></svg><svg width="28" height="28"><circle cx="14" cy="14" r="14" fill="#464646"/><path d="M11 12V8h10v8h-3M7 13h11v7H7z" fill="none" stroke="#fff" stroke-width="2.500"/></svg><span>Layers Panel</span></div>
<div class="bar"><q-icon name="style"></q-icon><q-icon name="laygrp"></q-icon><q-icon name="eyes"></q-icon><q-icon name="filter"></q-icon><q-chevron></q-chevron></div>
<div class="row"><q-icon name="gtable"></q-icon>hpi</div><div class="row sel"><q-check off mark="#777"></q-check><b></b></div>`);

define('map-canvas', ':host{flex:1;background:#fff;border-top:2px solid #888;overflow:hidden}svg{display:block}path{vector-effect:non-scaling-stroke;stroke:#1c1c26;fill:none;stroke-width:2}',
  `<svg width="2004" height="1278" viewBox="404 262 2004 1278">
<g transform="scale(1.5383)"><path style="fill:#6d70a3" d="M320 232.500L352 234 376 220V190.500H493L489 203.500 593 237V248.500L674 249.500H760L767 253.500 930 255 1098 254 1440 252.500 1530 254.500 1531.500 400 1533.500 539H1516V700L1515 820H1512.500V908L1432 915 1060 945 904 958 622 981Q620 940 613 920T607 906Q582 920 568 905L552 893 313 600V260z"/>
<path d="M376 213L392 196 398 192V196L406 204V211L402 217 410 214 466 236 468 240 495 239V251L507 251.500 516 254 524 258M508 258L518 250M664 258L673 250M746 251V258M752 251V258M1098 254V260M1432 876Q1440 887 1478 893T1509 894L1513 888"/></g>
<g transform="translate(820 1360) scale(.3827 .3333)">
<path style="stroke-width:3.500" d="M622 42L630 90 637 158M915 44h56M910 160v40"/>
<path d="M548 42L562 75 578 130 582 190 584 235 592 245 588 330 602 365 615 425M637 158L655 178 655 210 640 225 584 240M588 243H640L685 248M640 222L680 225 693 268M635 68L710 48M640 155L770 112 832 92 900 70M640 155L670 172 705 165 735 163 800 172 885 165 905 128M710 45L718 65 735 70 728 42M735 42L745 90 770 155 785 210 797 240 800 270 825 305V375L797 393 820 407M770 42L790 110 805 165M815 42L835 90 845 120 832 165M742 75L770 62 785 60 800 70 825 60M830 75H885L970 94M868 42L890 80 905 128 915 200 905 270 890 345 895 370M790 145L840 138 895 125M800 140L895 98M805 172L890 148M705 165V135M735 163L742 250 780 300 850 340 895 370 930 395M742 218L785 212 820 217M803 172V198L930 205 970 212M838 175V200M885 165L893 200M805 200Q870 248 915 210M912 160L930 155 970 148M930 155L935 205M965 45L940 95 935 155M797 242H910M825 245L850 275M825 278H900M865 242V278M820 300L895 302 970 298M641 243V297H697V335M667 250V295M667 268H722V335M641 340H755V270H800M725 335V245L740 240M640 340V425M755 315H785L820 300M825 305L850 330 890 345M850 325V345"/></g></svg>`);

define('status-bar', `:host{display:flex;align-items:flex-start;height:90px;flex:none;border-top:2px solid #b0b0b0;background:#ebebeb;white-space:nowrap;position:relative}
span{margin-top:26px;flex:none}.f{background:#fff;flex:none}
.b{border:2px solid #c9c9c9;background:linear-gradient(#e6e6e6,#f0f0f0);flex:none;display:flex}.b q-icon{width:32px;height:32px}
.sp{width:24px;height:44px;margin:24px 0 0 7px;border:1.500px solid #bbb;border-radius:12px;background:#fff;flex:none}.sp svg{display:block}
.grip{position:absolute;right:0;bottom:0}`,
  `<span style="margin-left:12px;width:140px">Updated loc</span><span style="margin-left:6px;width:138px">Coordinate</span>
<div class="f" style="width:593px;height:34px;margin-top:26px;padding-left:200px">-117.616,33.385</div>
<div class="b" style="width:52px;height:52px;margin:18px 0 0 3px;padding:8px"><q-icon name="mouse"></q-icon></div>
<span style="margin:24px 0 0 18px;width:72px">Scale</span>
<div class="f" style="width:200px;height:44px;margin-top:18px;border:2px solid #bbb;border-bottom-color:#fff;padding:6px 0 0 5px">1:319,491</div>
<svg width="34" height="42" style="margin-top:18px;flex:none"><path d="M0 0h28q6 0 6 6v30q0 6-6 6H0z" fill="#d4d4d4"/><path d="M11 18l6 7 6-7" fill="none" stroke="#fff" stroke-width="2.500"/></svg>
<div class="b" style="width:52px;height:52px;margin:16px 0 0 2px;padding:8px"><q-icon name="lock"></q-icon></div>
<span style="margin-left:18px;width:116px">Magnifier</span>
<div class="f" style="width:128px;height:44px;margin-top:22px;border:2px solid #bbb;padding:6px 0 0 5px">100%</div>
<div class="sp"><svg width="21" height="41"><path d="M6 15l5-5 5 5M6 27l5 5 5-5" fill="none" stroke="#333" stroke-width="2.500"/></svg></div>
<span style="margin-left:21px;width:118px">Rotation</span>
<div class="f" style="width:128px;height:44px;margin-top:22px;border:2px solid #bbb;padding:6px 0 0 5px">0.0</div>
<div class="sp"><svg width="21" height="41"><path d="M6 15l5-5 5 5M6 27l5 5 5-5" fill="none" stroke="#333" stroke-width="2.500"/></svg></div>
<q-check off mark="#d6d6d6" style="margin:30px 0 0 15px"></q-check><span style="margin-left:9px;width:89px">Render</span>
<div class="b" style="width:214px;height:36px;margin-top:26px;padding-left:8px"><q-icon name="crs"></q-icon><div style="margin:-1px 0 0 8px">EPSG:4326</div></div>
<div class="b" style="width:76px;height:36px;margin:26px 0 0 12px;padding:1px 0 0 8px"><q-icon name="bubble"></q-icon></div>
<svg class="grip" width="24" height="24"><path d="M2 22L22 2M9 22L22 9M16 22l6-6" stroke="#999" stroke-width="2"/></svg>`);

define('q-window', `:host{position:absolute;display:flex;flex-direction:column;background:#ebebeb;border-radius:10px;box-shadow:0 0 2px rgba(0,0,0,.45),0 16px 44px 4px rgba(0,0,0,.34)}.body{flex:1;display:flex;min-height:0}`,
  h => `<q-titlebar logo style="letter-spacing:${h.getAttribute('track')}px">${h.getAttribute('heading')}</q-titlebar><div class="body"><slot></slot></div>`);

define('props-nav', `:host{width:300px;flex:none;background:#5b5b5b;color:#fff;border-radius:0 0 0 10px}.i{height:72px;display:flex;align-items:center;padding-left:14px;gap:16px}.i span{margin-top:-2px}.on{background:#ebebeb;color:#000;gap:29px}`,
  [['tools', 'General'], ['style', 'Style'], ['label', 'Labels'], ['fields', 'Fields'], ['broom', 'Rendering'], ['display', 'Display'], ['actions', 'Actions'], ['joins', 'Joins'], ['diagrams', 'Diagrams'], ['meta', 'Metadata'], ['vars', 'Variables'], ['legend', 'Legend']].map(([i, t]) => `<div class="i${t === 'Joins' ? ' on' : ''}"><q-icon name="${i}"></q-icon><span>${t}</span></div>`).join(''));

define('joins-page', `:host{flex:1;display:flex}.split{width:14px;flex:none;display:flex;align-items:flex-start}.split i{margin-top:456px;width:12px;height:18px;background:#fff;display:flex;align-items:center;justify-content:center}.split i:before{content:"";width:10px;height:12px;border-radius:50%;background:#d2d2d2;border:1px solid #bbb}
.main{width:1552px;padding-top:6px}.table{height:738px;background:#fff;border:2px solid #b4b4b4;border-top-color:#8a8a8a}
.th{display:flex;height:34px;border-bottom:2px solid #cfcfcf}.th span{width:200px;padding-left:8px;border-right:2px solid #e4e4e4;height:24px;margin:4px 0;line-height:22px}.th span:last-child{border:0}
.row{display:flex;gap:28px;padding-left:12px;margin-top:38px}.row+.row{margin-top:46px}.row q-button{width:100px}.row q-icon{width:30px;height:30px}q-arrow{width:14px;height:11px;margin:14px 0 0 7px}`,
  `<div class="split"><i></i></div><div class="main"><div class="table"><div class="th">${['Join layer', 'Join field', 'Target field', 'Memory cache', 'Prefix', 'Joined fields'].map(t => `<span>${t}</span>`).join('')}</div></div>
<div class="row"><q-button><q-icon name="add"></q-icon></q-button><q-button><q-icon name="minus"></q-icon></q-button><q-button><q-icon name="pencil"></q-icon></q-button></div>
<div class="row"><q-button style="width:114px">Help</q-button><q-button style="width:142px;padding-left:16px">Style<q-arrow color="#111"></q-arrow></q-button><q-button style="width:125px">Apply</q-button></div></div>`);

define('q-combo', `:host{display:flex;width:456px;height:42px;background:#fff;border:2px solid #c8c8c8;border-bottom-color:#aaa;border-radius:8px;overflow:hidden;padding-left:18px}
q-icon{width:32px;height:32px;margin:2px 6px 0 0}.a{width:38px;font:bold 18.500px/38px "Liberation Sans",Arial,sans-serif;letter-spacing:-.3px;color:#222}.t{flex:1;line-height:30px}
svg{background:#d4d4d4;flex:none}`, h => (h.hasAttribute('table') ? '<q-icon name="gtable"></q-icon>' : '<span class="a">abc</span>') +
  '<span class="t"><slot></slot></span><svg width="32" height="38"><path d="M12 16l5-6 5 6M12 23l5 6 5-6" fill="none" stroke="#fff" stroke-width="2.400"/></svg>');

define('q-group', `:host{display:flex;flex-direction:column;width:930px}.cap{display:flex;align-self:flex-start;align-items:flex-start;height:34px;background:#ebebeb;padding:0 14px 0 5px;position:relative;white-space:nowrap}
.cap q-arrow{width:23px;height:14px;margin:8px 16px 0 0}.cap span{margin:-2px 0 0 13px}.box{margin-top:-6px;flex:1;background:#e1e1e1;border:2px solid #dcdcdc;border-top-color:#cfcfcf;border-radius:6px;padding:28px}`,
  h => `<div class="cap"><q-arrow color="#3a3a3a"></q-arrow><q-check></q-check><span>${h.getAttribute('caption')}</span></div><div class="box"><slot></slot></div>`);

define('field-list', `:host{display:flex;height:156px;border:2px solid #95918a;border-top-color:#777;background:#d4cfc7;color:#454545;overflow:hidden}
.l{flex:1;padding:4px 0 0 14px}.r{height:40px;display:flex;gap:25px;padding-top:2px}.bar{width:29px;background:#fafafa;padding:2px 5px}.bar i{display:block;height:36px;width:17px;border-radius:9px;background:#c1c1c1;margin-left:2px}.r span{margin-top:-2px}`,
  `<div class="l">${['geoid', 'pop2010', 'pct2010gq', 'city'].map(t => `<div class="r"><q-check list></q-check><span>${t}</span></div>`).join('')}</div><div class="bar"><i></i></div>`);

define('join-form', `:host{flex:1;padding:40px 41px 0 40px}.r{display:flex;justify-content:space-between;height:42px;margin-bottom:18px}.r>span{margin-top:2px}
.c{display:flex;gap:8px;height:38px}.c span{margin-top:-4px}.first{margin-top:-2px}.dis span{color:#808080}.edit{height:42px;background:#fff;border:2px solid #d0d0d0;color:#454545;padding:4px 0 0 4px}.foot{display:flex;justify-content:flex-end;gap:29px;margin-top:28px}`,
  `<div class="r"><span>Join layer</span><q-combo table>hpi</q-combo></div><div class="r"><span>Join field</span><q-combo>geoid</q-combo></div><div class="r"><span>Target field</span><q-combo>geoid</q-combo></div>
<div class="c first"><q-check off mark="#d4d4d4"></q-check><span>Cache join layer in virtual memory</span></div><div class="c dis"><q-check off></q-check><span>Create attribute index on join field</span></div>
<q-group caption="Choose which fields are joined" style="height:244px;margin-top:6px"><field-list></field-list></q-group>
<q-group caption="Custom field name prefix" style="height:130px;margin-top:20px"><div class="edit">hpi_</div></q-group>
<div class="foot"><q-button style="width:137px">Cancel</q-button><q-button style="width:138px">OK</q-button></div>`);

define('qgis-app', `:host{position:relative;width:2412px;height:1630px;overflow:hidden;background:linear-gradient(#d8d8d8 178px,#1c1f22 178px,#1c1f22 208px,#8a8a8a 212px,#141414 226px 365px,#1d5c3a 366px 430px,#141414 431px)}
.win{width:2408px;height:1630px;display:flex;flex-direction:column}.mid{flex:1;display:flex;min-height:0}`,
  `<div class="win"><q-titlebar style="letter-spacing:.8px">QGIS 2.18.2</q-titlebar><q-toolbar row="0"></q-toolbar><q-toolbar row="1"></q-toolbar><q-toolbar row="2"></q-toolbar>
<div class="mid"><side-tools></side-tools><layers-panel></layers-panel><map-canvas></map-canvas></div><status-bar></status-bar></div>
<q-window heading="Layer Properties - tracts | Joins" track="-.1" style="left:240px;top:398px;width:1872px;height:976px"><props-nav></props-nav><joins-page></joins-page></q-window>
<q-window heading="Add vector join" track="-.1" style="left:1192px;top:628px;width:1011px;height:846px"><join-form></join-form></q-window>`);
</script>
</body>
</html>
